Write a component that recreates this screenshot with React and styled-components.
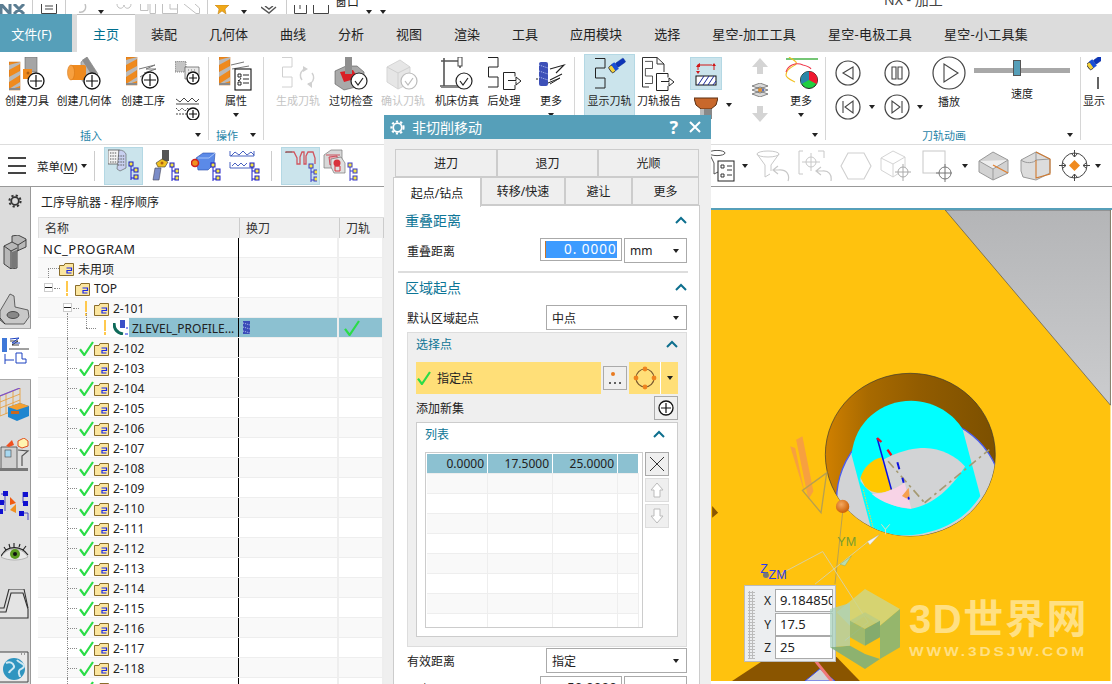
import React from "react";
import styled, { createGlobalStyle } from "styled-components";

const Global = createGlobalStyle`
  html, body { margin: 0; padding: 0; background: #fff; }
  body { font-family: "Noto Sans", "Noto Sans CJK SC", sans-serif; color: #222; overflow: hidden; }
  * { box-sizing: border-box; }
`;

const Page = styled.div`
  position: relative;
  width: 1112px;
  height: 684px;
  overflow: hidden;
  display: flex;
  flex-direction: column;
`;

/* ---------- quick bar ---------- */
const QuickBar = styled.div`
  position: relative;
  height: 14px;
  flex: none;
  display: flex;
  align-items: flex-end;
  overflow: hidden;
  background: #fff;
`;
const WindowTitle = styled.div`
  position: absolute;
  left: 884px;
  bottom: 6px;
  font-size: 14px;
  line-height: 16px;
  white-space: nowrap;
  color: #444;
`;
const QuickLabel = styled.span`
  font-size: 12px;
  line-height: 14px;
  height: 14px;
  margin: 0 4px 0 4px;
  position: relative;
  top: -5px;
  white-space: nowrap;
`;
const Ico = styled.svg`
  display: block;
  flex: none;
`;
const I = ({ w, h, children }) => (
  <Ico width={w} height={h} viewBox={`0 0 ${w} ${h}`} fill="none">{children}</Ico>
);
const QuickSlot = styled.div`
  width: ${(p) => p.$w}px;
  height: 14px;
  flex: none;
  display: flex;
  align-items: flex-end;
  justify-content: center;
  overflow: hidden;
`;
const QuickSep = styled.div`
  width: 1px;
  height: 14px;
  flex: none;
  background: #ccc;
  margin: 0 ${(p) => p.$m || 6}px;
`;

/* ---------- tabs ---------- */
const TabBar = styled.div`
  height: 38px;
  flex: none;
  display: flex;
  background: #dcdcdc;
`;
const FileTab = styled.div`
  width: 72px;
  margin-right: 5px;
  padding-right: 9px;
  background: #569fb9;
  color: #fff;
  font-size: 13px;
  display: flex;
  align-items: center;
  justify-content: center;
`;
const Tab = styled.div`
  padding: 0 16px;
  font-size: 13px;
  display: flex;
  align-items: center;
  white-space: nowrap;
  color: ${(p) => (p.$active ? "#00708f" : "#222")};
  background: ${(p) => (p.$active ? "#fff" : "transparent")};
  border-top: ${(p) => (p.$active ? "1px solid #bbb" : "none")};
  letter-spacing: ${(p) => (p.$wide ? "0.25px" : "0")};
  ${(p) => p.$active && "width: 58px;"}
`;

/* ---------- ribbon ---------- */
const Ribbon = styled.div`
  height: 93px;
  flex: none;
  display: flex;
  background: #fff;
  border-bottom: 1px solid #ddd;
  overflow: hidden;
`;
const Group = styled.div`
  position: relative;
  width: ${(p) => p.$w}px;
  flex: none;
  display: flex;
  flex-direction: column;
  &::after {
    content: "";
    position: absolute;
    right: 0;
    top: 5px;
    bottom: 4px;
    width: 1px;
    background: ${(p) => (p.$last ? "transparent" : "#d6d6d6")};
  }
`;
const GroupBody = styled.div`
  height: 74px;
  display: flex;
  padding-left: ${(p) => p.$pl || 0}px;
`;
const GroupFoot = styled.div`
  flex: 1;
  display: flex;
  align-items: center;
  justify-content: space-between;
  padding: 0 8px 0 ${(p) => p.$pl || 0}px;
  font-size: 11px;
  color: #1f84a8;
`;
const RibbonBtn = styled.div`
  width: ${(p) => p.$w}px;
  flex: none;
  height: ${(p) => (p.$active ? "63px" : "74px")};
  padding-top: ${(p) => (p.$active ? "2px" : "5px")};
  margin-top: ${(p) => (p.$active ? "2px" : "0")};
  display: flex;
  flex-direction: column;
  align-items: center;
  background: ${(p) => (p.$active ? "#cbe4ec" : "transparent")};
  border: ${(p) => (p.$active ? "1px solid #b4d8e4" : "none")};
  border-bottom: none;
`;
const IconBox = styled.div`
  height: 34px;
  display: flex;
  align-items: flex-start;
  justify-content: center;
  flex: none;
`;
const BtnLabel = styled.div`
  margin-top: 2px;
  font-size: 11px;
  line-height: 16px;
  white-space: nowrap;
  color: ${(p) => (p.$off ? "#c4c4c4" : "#222")};
`;
const PlayLabel = styled(BtnLabel)`
  align-self: start;
`;
const Caret = styled.span`
  display: inline-block;
  flex: none;
  width: 0;
  height: 0;
  border-left: 3.5px solid transparent;
  border-right: 3.5px solid transparent;
  border-top: 4px solid #222;
  margin-top: ${(p) => p.$mt || 0}px;
`;
const SmallCol = styled.div`
  width: ${(p) => p.$w}px;
  flex: none;
  display: flex;
  flex-direction: column;
  align-items: center;
  gap: ${(p) => p.$gap || 0}px;
  padding-top: ${(p) => p.$pt || 4}px;
`;
const CaretSlot = styled.div`
  width: ${(p) => p.$w}px;
  flex: none;
  display: flex;
  justify-content: center;
  padding-top: ${(p) => p.$pt}px;
`;
const ToggleBtn = styled.div`
  width: 32px;
  height: 33px;
  flex: none;
  background: #cbe4ec;
  border: 1px solid #b4d8e4;
  display: flex;
  align-items: center;
  justify-content: center;
`;
const AnimGrid = styled.div`
  width: 144px;
  flex: none;
  display: grid;
  grid-template-columns: 36px 12px 38px 8px 50px;
  grid-template-rows: 38px 30px;
  padding-top: 2px;
  align-items: center;
  justify-items: center;
`;
const SpeedBox = styled.div`
  width: 96px;
  flex: none;
  display: flex;
  flex-direction: column;
  align-items: center;
  padding-top: 10px;
`;
const SliderTrack = styled.div`
  position: relative;
  width: 96px;
  height: 5px;
  margin: 6px 0 11px;
  background: #a8a8a8;
`;
const SliderThumb = styled.div`
  position: absolute;
  left: 39px;
  top: -8px;
  width: 8px;
  height: 16px;
  background: #569fb9;
  border: 1px solid #555;
`;

/* ---------- toolbar ---------- */
const Toolbar = styled.div`
  height: 42px;
  flex: none;
  display: flex;
  align-items: center;
  background: #fff;
  border-bottom: 1px solid #999;
`;
const Burger = styled.div`
  width: 18px;
  margin-left: 8px;
  height: 17px;
  flex: none;
  display: flex;
  flex-direction: column;
  justify-content: space-between;
  & > i { display: block; height: 2px; background: #444; }
`;
const MenuLabel = styled.div`
  margin-left: 11px;
  font-size: 11.5px;
  width: 44px;
  white-space: nowrap;
  & u { text-underline-offset: 2px; }
`;
const ToolSep = styled.div`
  width: 1px;
  height: 30px;
  flex: none;
  background: #ccc;
  margin: 0 ${(p) => p.$r}px 0 ${(p) => p.$l}px;
`;
const ToolBtn = styled.div`
  width: ${(p) => p.$w}px;
  height: 38px;
  flex: none;
  display: flex;
  align-items: center;
  justify-content: center;
  background: ${(p) => (p.$active ? "#cbe4ec" : "transparent")};
  border: ${(p) => (p.$active ? "1px solid #b4d8e4" : "none")};
`;
const ToolRight = styled.div`
  margin-left: auto;
  margin-right: 9px;
  display: flex;
  align-items: center;
`;

/* ---------- main ---------- */
const Main = styled.div`
  flex: 1;
  min-height: 0;
  display: flex;
  overflow: hidden;
`;
const Sidebar = styled.div`
  width: 31px;
  flex: none;
  overflow: hidden;
`;
const SideItem = styled.div`
  height: ${(p) => p.$h}px;
  background: ${(p) => (p.$active ? "#fff" : "#dcdcdc")};
  border-right: ${(p) => (p.$active ? "none" : "1px solid #999")};
  border-top: ${(p) => (p.$active ? "1px solid #aaa" : "none")};
  border-bottom: ${(p) => (p.$active ? "1px solid #aaa" : "none")};
  display: flex;
  align-items: center;
  justify-content: center;
  overflow: hidden;
`;
const Navigator = styled.div`
  width: 353px;
  flex: none;
  padding-left: 7px;
  background: #fff;
  overflow: hidden;
`;
const NavTitle = styled.div`
  height: 30px;
  padding-left: 3px;
  font-size: 12px;
  display: flex;
  align-items: center;
  color: #222;
`;
const TreeHead = styled.div`
  height: 21px;
  display: grid;
  grid-template-columns: 201px 100px 1fr;
  background: #f0f0f0;
  border-top: 1px solid #ddd;
  border-left: 1px solid #ddd;
  font-size: 12px;
  color: #333;
`;
const HeadCell = styled.div`
  padding-left: ${(p) => p.$pl}px;
  display: flex;
  align-items: center;
  border-right: 1px solid #ccc;
`;
const TreeRow = styled.div`
  height: 20px;
  display: grid;
  grid-template-columns: 201px 100px 1fr;
  background: ${(p) => (p.$alt ? "#f9f9f9" : "#fff")};
  border-bottom: 1px solid #eee;
`;
const NameCell = styled.div`
  position: relative;
  display: flex;
  align-items: center;
  padding-left: ${(p) => p.$pl}px;
  padding-top: ${(p) => (p.$sel ? "0" : "2px")};
  border-right: 1px solid #000;
  font-size: 12px;
  white-space: nowrap;
  color: #222;
`;
const RootLabel = styled.span`
  font-size: 13px;
  letter-spacing: 0.5px;
`;
const Slot = styled.span`
  width: 16px;
  flex: none;
  display: flex;
  justify-content: center;
`;
const NodeLabel = styled.span`
  margin-left: 4px;
  ${(p) => p.$sel && "flex: 1; align-self: stretch; margin-left: 1px; padding: 1px 0 0 3px; display: flex; align-items: center; background: #8cc1d1;"}
`;
const Warn = styled.i`
  display: block;
  width: 2px;
  height: 15px;
  background: linear-gradient(#ffc94d 0 11px, transparent 11px 12px, #ffc94d 12px);
`;
const DataCell = styled.div`
  display: flex;
  align-items: center;
  padding-left: ${(p) => p.$pl || 0}px;
  border-right: 2px solid #eee;
  background: ${(p) => (p.$sel ? "#8cc1d1" : "transparent")};
`;
const Guide = styled.i`
  position: absolute;
  left: ${(p) => p.$x}px;
  top: ${(p) => p.$y}px;
  ${(p) => (p.$h ? `height: ${p.$h}px; border-left: 1px dotted #888;` : `width: ${p.$w}px; border-top: 1px dotted #888;`)}
`;
const MinusBox = styled.i`
  position: absolute;
  left: ${(p) => p.$x}px;
  top: 5px;
  width: 9px;
  height: 9px;
  border: 1px solid #ccc;
  background: linear-gradient(#fff 0 3px, #222 3px 4px, #fff 4px);
`;

/* ---------- viewport ---------- */
const Viewport = styled.div`
  position: relative;
  flex: 1;
  min-width: 0;
  padding-top: 21px;
  background: #fff;
`;
const ViewCanvas = styled.svg`
  display: block;
  border-top: 2px solid #569fb9;
`;
const CoordPopup = styled.div`
  position: absolute;
  left: 360px;
  top: 398px;
  width: 92px;
  height: 77px;
  padding: 3px 2px 0 3px;
  background: #eceef0;
  border: 1px solid #bbb;
  display: flex;
`;
const Grip = styled.div`
  width: 7px;
  flex: none;
  margin-top: 2px;
  height: 68px;
  background-image: radial-gradient(#bbb 1px, transparent 1.2px);
  background-size: 3px 3px;
`;
const CoordRows = styled.div`
  flex: 1;
  display: flex;
  flex-direction: column;
`;
const CoordRow = styled.div`
  height: 23.5px;
  display: flex;
  align-items: center;
  justify-content: flex-end;
  gap: 4px;
  font-size: 12px;
`;
const CoordInput = styled.div`
  width: 58px;
  height: 23px;
  padding-left: 4px;
  background: #fff;
  border: 1px solid #aaa;
  font-size: 13px;
  line-height: 21px;
  overflow: hidden;
  white-space: nowrap;
`;
const Watermark = styled.div`
  position: absolute;
  left: 830px;
  top: 589px;
  display: flex;
  align-items: flex-start;
  gap: 8px;
  pointer-events: none;
`;
const MarkText = styled.div`
  padding-top: 7px;
  color: rgba(255, 236, 178, 0.72);
`;
const MarkTitle = styled.div`
  font-family: "Liberation Sans", "Noto Sans CJK SC", sans-serif;
  font-weight: 700;
  font-size: 40px;
  line-height: 46px;
  letter-spacing: 1.6px;
  white-space: nowrap;
`;
const MarkSub = styled.div`
  margin-top: 3px;
  font-family: "Liberation Sans", sans-serif;
  font-weight: 700;
  font-size: 13.5px;
  line-height: 13px;
  letter-spacing: 2.5px;
  transform: scaleX(1.15);
  transform-origin: left;
  white-space: nowrap;
`;

/* ---------- dialog ---------- */
const Dialog = styled.div`
  position: absolute;
  left: 384px;
  top: 115px;
  width: 327px;
  height: 569px;
  background: #efefef;
  overflow: hidden;
`;
const DlgTitle = styled.div`
  height: 24px;
  padding: 0 10px 0 6px;
  display: flex;
  align-items: center;
  background: #569fb9;
  color: #fff;
  font-size: 14px;
`;
const DlgName = styled.span`
  margin-left: 7px;
  flex: 1;
`;
const DlgTools = styled.div`
  display: flex;
  align-items: center;
  gap: 11px;
  font-weight: 700;
  font-size: 18px;
`;
const DlgTabs = styled.div`
  height: 28px;
  margin-top: ${(p) => p.$mt || 0}px;
  padding-left: ${(p) => p.$pl}px;
  display: flex;
  align-items: flex-start;
`;
const DlgTab = styled.div`
  position: relative;
  width: ${(p) => p.$w}px;
  height: ${(p) => (p.$active ? "30px" : "28px")};
  flex: none;
  display: flex;
  align-items: center;
  justify-content: center;
  font-size: 12px;
  color: #222;
  background: ${(p) => (p.$active ? "#fff" : "#efefef")};
  border: 1px solid #ccc;
  border-bottom: ${(p) => (p.$active ? "none" : "1px solid #ccc")};
  z-index: ${(p) => (p.$active ? 2 : 1)};
`;
const DlgPanel = styled.div`
  margin: 0 11px 0 9px;
  padding: 0 12px 0 13px;
  height: 500px;
  background: #fff;
  border: 1px solid #ccc;
  border-bottom: none;
`;
const SectionHead = styled.div`
  height: ${(p) => p.$h}px;
  margin-left: ${(p) => p.$ml || 0}px;
  margin-bottom: ${(p) => p.$mb || 0}px;
  display: flex;
  align-items: center;
  justify-content: space-between;
  padding-right: ${(p) => p.$pr || 0}px;
  font-size: ${(p) => p.$fs || 14}px;
  color: #0d7596;
`;
const FieldRow = styled.div`
  display: flex;
  align-items: center;
  justify-content: space-between;
  height: 25px;
  font-size: 12px;
  margin-top: ${(p) => p.$mt || 0}px;
`;
const FieldGroup = styled.div`
  display: flex;
  gap: 2px;
  align-items: flex-start;
`;
const NumInput = styled.div`
  width: 82px;
  height: 23px;
  padding: 2px 4px;
  background: #fff;
  border: 1px solid #aaa;
  font-size: 13.5px;
  text-align: right;
  overflow: hidden;
`;
const NumFill = styled.div`
  height: 17px;
  line-height: 17px;
  background: #3d9bff;
  color: #fff;
  letter-spacing: 1px;
  white-space: nowrap;
  border-left: 1px solid #c8752a;
  overflow: hidden;
  text-align: left;
  padding-left: 18px;
`;
const SelectBox = styled.div`
  width: ${(p) => p.$w}px;
  height: ${(p) => p.$h || 25}px;
  padding: 0 7px 0 5px;
  background: #fff;
  border: 1px solid #aaa;
  display: flex;
  align-items: center;
  justify-content: space-between;
  font-size: 12px;
`;
const Divider = styled.div`
  height: 2px;
  margin: 8px -1px 0 -9px;
  background: #ddd;
`;
const PointGroup = styled.div`
  margin: 2px 0 0 0;
  width: 280px;
  height: 315px;
  padding: 0 8px;
  background: #efefef;
  border: 1px solid #ddd;
`;
const SelectBar = styled.div`
  display: flex;
  align-items: center;
  gap: 2px;
`;
const PointBar = styled.div`
  width: 185px;
  height: 32px;
  padding-left: 1px;
  display: flex;
  align-items: center;
  gap: 6px;
  background: #ffdf78;
  font-size: 12px;
`;
const SquareBtn = styled.div`
  width: 24px;
  height: 24px;
  flex: none;
  display: flex;
  align-items: center;
  justify-content: center;
  background: #efefef;
  border: 1px solid ${(p) => (p.$light ? "#ddd" : "#aaa")};
`;
const SplitBtn = styled.div`
  width: 49px;
  height: 32px;
  flex: none;
  display: flex;
  align-items: center;
  background: #ffdf78;
`;
const SplitMain = styled.div`
  width: 32px;
  height: 100%;
  display: flex;
  align-items: center;
  justify-content: center;
  border-right: 1px solid #fff;
`;
const SplitCaret = styled.div`
  flex: 1;
  display: flex;
  justify-content: center;
`;
const AddRow = styled.div`
  height: 24px;
  margin-top: 2px;
  display: flex;
  align-items: center;
  justify-content: space-between;
  font-size: 12px;
`;
const ListBox = styled.div`
  margin-top: 2px;
  height: 215px;
  padding: 0 8px;
  background: #fff;
  border: 1px solid #ccc;
`;
const ListBody = styled.div`
  margin-top: 7px;
  display: flex;
  gap: 2px;
`;
const ListTable = styled.div`
  width: 218px;
  height: 176px;
  padding: 1px 3px 0 1px;
  border: 1px solid #ccc;
  overflow: hidden;
  flex: none;
`;
const ListRow = styled.div`
  height: 20px;
  display: grid;
  grid-template-columns: 61px 65px 65px 1fr;
  background: ${(p) => (p.$alt ? "#f9f9f9" : "#fff")};
  border-bottom: 1px solid #eee;
`;
const ListCell = styled.div`
  padding-right: 3px;
  text-align: right;
  font-size: 12px;
  line-height: 19px;
  color: #222;
  background: ${(p) => (p.$sel ? "#8cc1d1" : "transparent")};
  border-right: 1px solid ${(p) => (p.$sel ? "#fff" : "#eee")};
`;
const ListTools = styled.div`
  display: flex;
  flex-direction: column;
  gap: 2px;
`;

/* ---------- drawings ---------- */
const Cutter = ({ x = 0, y = 0, h = 28 }) => (
  <g transform={`translate(${x} ${y})`}>
    <rect width="11" height={h} fill="#ef8a1e" stroke="#c46a10" strokeWidth=".5" />
    <path d="M0 3 11 0V2L0 8ZM0 15 11 9V13L0 20ZM0 27 11 20V24L0 28Z" fill="#b9b9b9" />
    <rect y={h - 2} width="11" height="2" fill="#8a8a8a" />
  </g>
);
const Plus = ({ cx, cy, r = 8 }) => (
  <g>
    <circle cx={cx} cy={cy} r={r} fill="#fff" stroke="#111" strokeWidth="1.3" />
    <path d={`M${cx - r + 2} ${cy}H${cx + r - 2}M${cx} ${cy - r + 2}V${cy + r - 2}`} stroke="#111" strokeWidth="1.2" />
  </g>
);
const CheckBadge = ({ cx, cy, r = 8, c = "#222" }) => (
  <g>
    <circle cx={cx} cy={cy} r={r} fill="#fff" stroke={c} strokeWidth="1.2" />
    <path d={`M${cx - 4} ${cy}l3 4 5-7`} stroke={c} strokeWidth="1.2" />
  </g>
);
const Path3 = ({ x = 0, y = 0, c = "#222", s = 1 }) => (
  <path transform={`translate(${x} ${y}) scale(${s})`} d="M0 .5H10V10H.5V20H10V30H0" stroke={c} strokeWidth="1" />
);
const Torch = ({ x = 0, y = 0 }) => (
  <g transform={`translate(${x} ${y}) rotate(-35) scale(.8)`}>
    <rect x="0" y="-4" width="6" height="9" rx="2" fill="#f4d23c" stroke="#223" />
    <rect x="5" y="-5" width="5" height="10" fill="#1a4fd8" />
    <rect x="10" y="-3" width="12" height="6" rx="1" fill="#0d35b8" stroke="#0a2a90" strokeWidth=".5" />
  </g>
);
const DocArrow = ({ x = 0, y = 0 }) => (
  <g transform={`translate(${x} ${y})`} stroke="#222" strokeWidth="1">
    <path d="M12 4.5V.5H.5V17.5H12V13" />
    <path d="M5 8.5H13V5L18 9 13 13V9.5" fill="#fff" />
  </g>
);

const IcoCreateTool = () => (
  <I w={36} h={34}>
    <rect x="16" y="0" width="12" height="15" fill="#a5a5a5" stroke="#666" strokeWidth=".6" />
    <path d="M14 12h9v4l-2 6h-7z" fill="#ef8a1e" />
    <circle cx="19" cy="16" r="1.5" fill="#b06010" />
    <Cutter y={5} />
    <Plus cx={27} cy={24} />
  </I>
);
const IcoCreateGeom = () => (
  <I w={34} h={34}>
    <path d="M14 5 20 0 31 17 20 30 14 22Z" fill="#b9b9b9" stroke="#777" strokeWidth=".6" />
    <path d="M15 3 20 0 30 16 24 17Z" fill="#8d8d8d" />
    <rect x="3" y="8" width="16" height="15" rx="2" fill="#ef8a1e" />
    <ellipse cx="4" cy="15.5" rx="3.5" ry="7.5" fill="#f7a040" stroke="#d07010" strokeWidth=".5" />
    <Plus cx={25} cy={24} />
  </I>
);
const IcoCreateOp = () => (
  <I w={34} h={34}>
    <Cutter y={0} />
    <path d="M13 12 29 8 20 12 30 12 18 16M14 20 22 15" stroke="#777" strokeWidth="1" />
    <Plus cx={24} cy={23} />
  </I>
);
const IcoSmallBlocks = () => (
  <I w={25} h={24}>
    <rect x="0" y="0" width="11" height="11" fill="#c4c4c4" stroke="#555" strokeWidth=".7" strokeDasharray="1 1" />
    <path d="M10 6h14v12H10z" fill="#e8e8e8" stroke="#555" strokeWidth=".7" />
    <path d="M13 9h8M13 12h8" stroke="#777" strokeDasharray="1 2" />
    <Plus cx={18} cy={17} r={6} />
  </I>
);
const IcoSmallWaves = () => (
  <I w={25} h={24}>
    <path d="M1 3l4 3 4-4 4 4 4-4 4 4 3-3M1 8H24" stroke="#333" strokeWidth=".9" />
    <path d="M1 12l3 3 3-3 3 3 3-3 3 3 3-3 3 3M1 18H14" stroke="#333" strokeWidth=".9" strokeDasharray="2 1" />
    <Plus cx={18} cy={18} r={6} />
  </I>
);
const IcoAttr = () => (
  <I w={34} h={34}>
    <Cutter x={0} y={0} />
    <path d="M12 8 25 5M13 12 30 9" stroke="#777" />
    <rect x="16" y="12" width="16" height="21" fill="#fff" stroke="#111" strokeWidth="1.1" />
    <path d="M19 17h3v3h-3zM19 25h3v3h-3zM24 18h6M24 26h6M24 22h6M19 23l1 1 2-3" stroke="#111" strokeWidth=".9" />
  </I>
);
const IcoGenPath = () => (
  <I w={34} h={34}>
    <Path3 x={1} y={0} c="#d0d0d0" />
    <path d="M21 23a7 7 0 0 1 1-10l3-1M31 16a7 7 0 0 1-1 10l-3 1" stroke="#d0d0d0" strokeWidth="1.5" />
    <path d="M22 9l5 3-5 3zM31 31l-5-4 5-2z" fill="#d0d0d0" />
  </I>
);
const IcoGouge = () => (
  <I w={34} h={34}>
    <path d="M1 14 12 9H23L30 15V28L10 33 1 27Z" fill="#a9a9a9" stroke="#555" strokeWidth=".6" />
    <path d="M6 15 19 13 24 21 10 25Z" fill="#d91f26" />
    <rect x="11" y="0" width="7" height="17" fill="#8f8f8f" />
    <CheckBadge cx={25} cy={24} />
  </I>
);
const IcoConfirm = () => (
  <I w={34} h={34}>
    <path d="M1 10 14 3 24 10V26L12 32 1 25Z" fill="#e6e6e6" stroke="#d5d5d5" />
    <path d="M1 10 12 16V32M12 16 24 10" stroke="#d0d0d0" />
    <CheckBadge cx={23} cy={24} c="#bbb" />
  </I>
);
const IcoMachine = () => (
  <I w={34} h={34}>
    <path d="M4 29V1M1 4H21M20 1V11M0 29H24" stroke="#555" strokeWidth="1.6" />
    <rect x="18" y="0" width="4" height="9" fill="#fff" stroke="#444" />
    <path d="M1 29h22v2H1z" fill="#888" />
    <CheckBadge cx={24} cy={24} />
  </I>
);
const IcoPost = () => (
  <I w={34} h={34}>
    <Path3 x={1} y={0} />
    <DocArrow x={16} y={15} />
  </I>
);
const IcoMore1 = () => (
  <I w={30} h={34}>
    <rect x="3" y="5" width="9" height="24" rx="2" fill="#3d50b8" />
    <path d="M3 8l9 3M3 14l9 3M3 20l9 3" stroke="#b8c4f0" strokeDasharray="1 1" />
    <path d="M14 12 28 8 20 16M0 22h2M14 23 26 17" stroke="#222" strokeWidth="1.1" />
    <path d="M12 26 24 21 14 27" stroke="#222" />
  </I>
);
const IcoShowPath = () => (
  <I w={32} h={34}>
    <Path3 x={1} y={1} />
    <Torch x={16} y={13} />
  </I>
);
const IcoReport = () => (
  <I w={34} h={34}>
    <path d="M.5 .5H15L22 7V15M22 7H15V.5M7 30H.5V.5" stroke="#333" />
    <Path3 x={3} y={4} s={0.75} />
    <DocArrow x={14} y={16} />
  </I>
);
const IcoThick = () => (
  <I w={24} h={24}>
    <path d="M4 8V3M20 8V2M6 3H18" stroke="#d01818" strokeWidth="1" />
    <path d="M2 5l2-3 2 3zM18 4l2-3 2 3zM6 1v4l-3-2z" fill="#d01818" />
    <path d="M2 9 4 12 6 9z" fill="#d01818" />
    <rect x="2" y="14" width="20" height="9" fill="#fff" stroke="#111" />
    <path d="M4 23l6-9M9 23l6-9M14 23l6-9M19 23l3-4" stroke="#1a2a9a" />
  </I>
);
const IcoHolder = () => (
  <I w={24} h={22}>
    <path d="M0 1H24L22 8 17 12H7L2 8Z" fill="#c8682c" stroke="#5a2e10" />
    <rect x="6" y="12" width="12" height="10" fill="#888" />
    <rect x="6" y="12" width="4" height="10" fill="#bbb" />
  </I>
);
const IcoUp = () => (
  <I w={16} h={16}><path d="M8 0 16 9H11V16H5V9H0Z" fill="#d4d4d4" /></I>
);
const IcoDown = () => (
  <I w={16} h={16}><path d="M8 16 16 7H11V0H5V7H0Z" fill="#d4d4d4" /></I>
);
const IcoLayers = () => (
  <I w={16} h={14}>
    <path d="M8 0 16 3 8 6 0 3ZM0 7 8 4 16 7 8 10ZM0 11 8 8 16 11 8 14Z" fill="#d8d8d8" stroke="#444" strokeWidth=".6" />
    <circle cx="8" cy="7" r="2" fill="#e09030" />
    <circle cx="11" cy="7" r="1" fill="#3050c0" />
  </I>
);
const IcoMore2 = () => (
  <I w={33} h={32}>
    <path d="M1 2H33" stroke="#18a018" strokeWidth="1.2" />
    <path d="M4 0c4 3 10 5 6 8-5 3-9 5-9 10 0 3 5 5 9 7" stroke="#f2c020" strokeWidth="1.1" />
    <path d="M1 15c2-7 10-10 17-7 4 1 7 2 8 4" stroke="#f0384c" strokeWidth="1.1" />
    <circle cx="24" cy="23" r="8.5" fill="#1fcf40" stroke="#222" strokeWidth="1" />
    <path d="M24 23V14.5A8.5 8.5 0 0 1 31.5 27Z" fill="#f01830" />
    <path d="M24 23V14.5A8.5 8.5 0 0 0 16.6 27Z" fill="#2a86a8" />
  </I>
);
const Round = ({ r = 12, children }) => {
  const s = r * 2 + 2;
  return (
    <I w={s} h={s}>
      <circle cx={r + 1} cy={r + 1} r={r} stroke="#444" strokeWidth="1.2" />
      <g stroke="#444" strokeWidth="1.1" transform={`translate(${r + 1} ${r + 1})`}>{children}</g>
    </I>
  );
};
const IcoShowTorch = () => (
  <I w={14} h={34}>
    <Torch x={1} y={10} />
    <path d="M11 20V32" stroke="#222" strokeWidth="1.4" />
  </I>
);

const NodeTree = ({ x = 0, y = 0, c = "#1a1ac8" }) => (
  <g transform={`translate(${x} ${y})`}>
    <path d="M2 0V18M2 8H6M2 16H6" stroke={c} />
    <rect x="0" y="0" width="4" height="4" fill="#f5e642" stroke={c} />
    <rect x="5" y="6" width="4" height="4" fill="#f5e642" stroke={c} />
    <rect x="5" y="13" width="4" height="4" fill="#f5e642" stroke={c} />
  </g>
);
const TbProgram = () => (
  <I w={32} h={33}>
    <rect x="0" y="1" width="11" height="14" fill="#f4f4f4" stroke="#444" strokeWidth=".7" />
    <path d="M2 4h7M2 7h7M2 10h7M2 13h7" stroke="#555" strokeDasharray="1.4 1" />
    <path d="M11 1c4 0 6 2 7 4v14l-6 3-3-2z" fill="#c8d0f0" stroke="#555" strokeWidth=".6" />
    <path d="M10 7h7M10 10h7M10 13h7M10 16h7" stroke="#555" strokeDasharray="1.4 1" />
    <NodeTree x={21} y={13} />
  </I>
);
const TbTool = () => (
  <I w={28} h={32}>
    <rect x="11" y="0" width="7" height="11" fill="#555" />
    <path d="M5 13 11 9 17 12 14 17H7Z" fill="#f0c020" stroke="#333" strokeWidth=".6" />
    <circle cx="11" cy="13" r="1.5" fill="#b06010" />
    <path d="M4 18H10L8 30 2 30 3 24Z" fill="#7a8cc8" stroke="#445" strokeWidth=".6" />
    <NodeTree x={19} y={13} />
  </I>
);
const TbGeom = () => (
  <I w={34} h={32}>
    <path d="M5 8 12 3H24L23 14 17 20H7Z" fill="#5b8ae8" stroke="#2a4aa8" strokeWidth=".6" />
    <path d="M7 8H18L24 3" stroke="#a8c4f8" />
    <circle cx="4" cy="13" r="3.5" fill="#f09020" stroke="#d02020" strokeWidth="1.5" />
    <NodeTree x={20} y={13} />
  </I>
);
const TbWave = () => (
  <I w={32} h={34}>
    <path d="M1 2V7H25V2M2 7 6 3l4 3 4-4 4 4 4-3 3 3" stroke="#1a3ab0" strokeWidth=".8" />
    <path d="M1 13V19H25M3 17l3-3 3 3 3-3 3 3 3-3" stroke="#1a3ab0" strokeWidth=".8" />
    <NodeTree x={21} y={14} />
  </I>
);
const TbPathOn = () => (
  <I w={32} h={32}>
    <path d="M1 3V2H9L12 8V14H15V7L17 2H19V14H21V6L23 2H28L30 8V14" stroke="#d0555f" strokeWidth="1.3" />
    <path d="M1 3V2H7" stroke="#777" />
    <NodeTree x={24} y={14} c="#3a3ac8" />
  </I>
);
const TbGouge = () => (
  <I w={36} h={34}>
    <path d="M1 6 8 1H19V14L11 19H1Z" fill="#d8d8d8" stroke="#777" strokeWidth=".7" />
    <path d="M3 6H17M6 8l8-1 1 6-8 3z" stroke="#c73040" fill="#f0a8b0" strokeWidth=".8" />
    <path d="M8 10 18 8 22 14V24L11 24 8 18Z" fill="#e0e0e0" stroke="#777" strokeWidth=".7" />
    <circle cx="14" cy="14" r="3.5" fill="#d8323c" />
    <path d="M12 17h5v5h-5z" stroke="#d8323c" />
    <NodeTree x={25} y={14} c="#3a3ac8" />
  </I>
);
const TbFunnel = () => (
  <I w={26} h={32}>
    <ellipse cx="8" cy="3" rx="8" ry="2.6" stroke="#555" />
    <path d="M0 3 5 13V24L11 21" stroke="#555" />
    <rect x="9" y="11" width="16" height="20" fill="#fff" stroke="#222" />
    <path d="M12 15h3v3h-3zM12 24h3v3h-3zM18 16h5M18 20h5M18 25h5" stroke="#222" strokeWidth=".9" />
  </I>
);
const TbFunnelBack = () => (
  <I w={34} h={32}>
    <ellipse cx="12" cy="4" rx="11" ry="3" stroke="#c8c8c8" />
    <path d="M1 4 9 15V27L14 24M23 4 15 15V21" stroke="#c8c8c8" />
    <path d="M32 31c2-6-1-12-10-11l-4 0M22 16 17 20 22 24" stroke="#c8c8c8" strokeWidth="1.2" />
  </I>
);
const TbTarget = () => (
  <I w={34} h={32}>
    <path d="M5 1H1V24H5M20 1H26V8" stroke="#c8c8c8" />
    <circle cx="13" cy="12" r="5" stroke="#c8c8c8" />
    <path d="M13 3V21M4 12H22" stroke="#c8c8c8" />
    <path d="M33 31c1-6-2-11-9-10H19M23 17 18 21 23 25" stroke="#c8c8c8" strokeWidth="1.2" />
  </I>
);
const TbHex = () => (
  <I w={32} h={28}>
    <path d="M8 1H24L31 14 24 27H8L1 14Z" stroke="#cfcfcf" strokeWidth="1.1" />
  </I>
);
const TbCubePlus = () => (
  <I w={32} h={32}>
    <path d="M1 8 13 1 25 7V19L13 27 1 20ZM1 8 13 14 25 7M13 14V27" stroke="#d4d4d4" />
    <circle cx="23" cy="22" r="5" fill="#fff" stroke="#aaa" />
    <path d="M23 14V31M15 22H31" stroke="#aaa" />
  </I>
);
const TbSquarePlus = () => (
  <I w={30} h={32}>
    <rect x="1" y="1" width="22" height="22" stroke="#c8c8c8" />
    <circle cx="23" cy="23" r="6" fill="#fff" stroke="#777" />
    <path d="M23 14V32M14 23H31" stroke="#777" />
  </I>
);
const TbCubeCut = () => (
  <I w={31} h={30}>
    <path d="M1 10 15 1 30 9V22L15 29 1 21Z" fill="#d2d2d2" stroke="#999" />
    <path d="M1 10 15 18 30 9" stroke="#999" fill="#eee" />
    <path d="M15 18V29" stroke="#999" />
    <path d="M15 14 30 22" stroke="#e08030" strokeWidth="1.2" />
  </I>
);
const TbCubeSlice = () => (
  <I w={31} h={30}>
    <path d="M1 9 16 1 30 8V22L16 29 3 26 1 20Z" fill="#dcdcdc" stroke="#999" />
    <path d="M1 9C6 13 14 12 16 9L30 8M16 1 16 9" stroke="#999" />
    <path d="M16 1 30 8V23L16 27V9" stroke="#d07a30" strokeWidth="1.1" />
  </I>
);
const TbFit = () => (
  <I w={31} h={31}>
    <circle cx="15.5" cy="15.5" r="12.5" stroke="#444" />
    <path d="M15.5 10 21 15.5 15.5 21 10 15.5Z" fill="#f08a1e" />
    <path d="M15.5 0V7M0 15.5H7M31 15.5H24M15.5 31V24M13 4l2.5 3 2.5-3M4 13l3 2.5L4 18M27 13l-3 2.5 3 2.5M13 27l2.5-3 2.5 3" stroke="#444" />
  </I>
);

const Folder = () => (
  <I w={15} h={14}>
    <path d="M.5 3.5V13.5H14.5V1.5H6L5 3.5Z" fill="#fbe6a0" stroke="#8a6d2b" />
    <path d="M7.5 6H12.5V8.5H8V11H12.5" stroke="#1a28e8" strokeWidth="1.2" />
  </I>
);
const OpIcon = () => (
  <I w={15} h={15}>
    <path d="M1 3c0 6 3 10 9 11" stroke="#0f6a5a" strokeWidth="3" />
    <rect x="7" y="0" width="5" height="8" fill="#3a50c8" />
    <path d="M12 14h3M13 8h2" stroke="#1a28e8" />
  </I>
);
const Check = ({ s = 15 }) => (
  <I w={s} h={s}>
    <path d={`M1 ${s * 0.55} ${s * 0.35} ${s - 1} ${s - 1} 1`} stroke="#2bdc48" strokeWidth="2.2" />
  </I>
);
const TreeToolIcon = () => (
  <I w={8} h={13}>
    <rect width="7" height="13" fill="#3a4cb8" />
    <path d="M0 2l7 2M0 6l7 2M0 10l7 2" stroke="#b8c4f0" strokeDasharray="1 1" />
  </I>
);
const Chevron = () => (
  <I w={12} h={8}>
    <path d="M1 7 6 2 11 7" stroke="#0d6f8e" strokeWidth="2" />
  </I>
);
const Gear = ({ c = "#fff", s = 14 }) => (
  <I w={s} h={s}>
    <circle cx={s / 2} cy={s / 2} r={s / 2 - 3.2} stroke={c} strokeWidth="1.8" />
    <circle cx={s / 2} cy={s / 2} r={s / 2 - 1.4} stroke={c} strokeWidth="2" strokeDasharray="2.2 2.2" />
  </I>
);

const SideBlock = () => (
  <I w={24} h={34}>
    <path d="M1 11 9 7V1l6-1 8 4V12L14 16V33L8 34 1 29Z" fill="#b8b8b8" stroke="#333" strokeWidth=".9" />
    <path d="M1 11 8 16 14 13M8 16V34M9 7 15 10V16M15 10 23 5" stroke="#333" strokeWidth=".9" />
    <path d="M9 17 14 15V32L9 34Z" fill="#777" />
  </I>
);
const SideBracket = () => (
  <I w={30} h={32}>
    <path d="M0 18 10 1 14 3 15 14 28 17 29 24 24 31 5 31 0 27Z" fill="#c8c8c8" stroke="#444" strokeWidth=".8" />
    <ellipse cx="13" cy="22" rx="6" ry="3.5" fill="#888" stroke="#333" strokeWidth=".8" />
    <path d="M0 25 5 31" stroke="#333" />
  </I>
);
const SideProg = () => (
  <I w={28} h={36}>
    <rect x="0" y="2" width="5" height="14" fill="#3f78d8" />
    <path d="M8 5h8L10 9h7M7 13h20" stroke="#111" strokeWidth=".8" />
    <path d="M8 3 17 2 10 7 18 7M3 18V28M3 24H12" stroke="#1a40c0" strokeWidth="1" />
    <path d="M14 17V27H24V23L20 23V17Z" stroke="#1a40c0" strokeWidth="1" />
  </I>
);
const SideMesh = () => (
  <I w={30} h={34}>
    <path d="M0 8 20 0V20L0 28ZM0 14l20-8M0 20l20-8M6 6V26M13 3V23" stroke="#e8a040" strokeWidth=".9" />
    <path d="M0 8l20-8" stroke="#7a50d0" strokeWidth="1.2" />
    <path d="M8 19 20 15 29 18V28L17 33 8 29Z" fill="#1f86d0" />
    <path d="M8 19 20 15 29 18 17 22Z" fill="#f5a030" />
    <rect x="11" y="23" width="8" height="3" fill="#c86820" />
  </I>
);
const SideMachine = () => (
  <I w={30} h={34}>
    <path d="M1 9h16v22H1z" fill="#d0d0d0" stroke="#444" strokeWidth=".8" />
    <rect x="5" y="12" width="6" height="7" fill="#a8d8f0" stroke="#444" strokeWidth=".6" />
    <path d="M18 12 28 13 22 18 22 28" stroke="#555" strokeWidth="1.2" />
    <rect x="0" y="30" width="28" height="3" fill="#777" />
    <path d="M6 8 12 2 14 7 9 9Z" fill="#f05020" />
    <path d="M18 3 24 0 28 3V8L22 10 18 8Z" fill="#fff4b0" stroke="#e05020" />
  </I>
);
const SideNet = () => (
  <I w={30} h={32}>
    <path d="M1 5H5V22M1 13H5M23 3V14M23 14H28M21 24H28V31" stroke="#4a4ac0" />
    <rect x="3" y="2" width="5" height="5" fill="#1010d0" />
    <rect x="0" y="11" width="4" height="5" fill="#1010d0" />
    <rect x="0" y="20" width="3" height="5" fill="#1010d0" />
    <rect x="23" y="3" width="5" height="5" fill="#1010d0" />
    <rect x="23" y="12" width="5" height="5" fill="#1010d0" />
    <rect x="19" y="22" width="5" height="5" fill="#1010d0" />
    <path d="M10 8 16 14 10 16Z" fill="#f05a10" />
    <path d="M16 15 10 21 16 24Z" fill="#f09020" />
  </I>
);
const SideEye = () => (
  <I w={28} h={18}>
    <path d="M0 14C6 4 20 3 27 14 20 18 7 18 0 14Z" fill="#e8e8e8" stroke="#888" strokeWidth=".5" />
    <circle cx="14" cy="11" r="5" fill="#5a9a20" />
    <circle cx="14" cy="11" r="2" fill="#111" />
    <path d="M0 13C6 2 20 2 27 12M5 7 3 4M9 5 8 1M13 4V0M18 4 19 1M22 7 25 3" stroke="#222" strokeWidth="1.1" />
  </I>
);
const SideProfile = () => (
  <I w={30} h={30}>
    <path d="M0 23H6L11 4H23L28 20V29H0" stroke="#333" strokeWidth="1.1" fill="#e4e4e4" />
    <path d="M0 19H4L9 0H24L28 19" stroke="#333" strokeWidth="1.1" />
  </I>
);
const SideGlobe = () => (
  <I w={30} h={32}>
    <path d="M0 1H28V31H0" stroke="#444" fill="#eaeaea" />
    <path d="M21 3h1M24 3h1" stroke="#444" />
    <circle cx="14" cy="18" r="11" fill="#2f95c0" />
    <path d="M6 12c4-2 7 0 8 3s-4 3-5 7M17 9c2 3 7 3 7 6s-4 2-5 5 1 4 1 6" stroke="#cfe8f2" strokeWidth="2" />
  </I>
);

/* ---------- data ---------- */
const tabs = ["装配", "几何体", "曲线", "分析", "视图", "渲染", "工具", "应用模块", "选择", "星空-加工工具", "星空-电极工具", "星空-小工具集"];
const programs = Array.from({ length: 18 }, (_, i) => `2-${102 + i}`);
const listRows = Array.from({ length: 9 }, (_, i) => i);

const NavRows = () => {
  const rows = [];
  rows.push(
    <TreeRow key="root"><NameCell $pl={5}><RootLabel>NC_PROGRAM</RootLabel></NameCell><DataCell /><DataCell /></TreeRow>
  );
  rows.push(
    <TreeRow key="unused" $alt>
      <NameCell $pl={5}>
        <Guide $x={10} $y={10} $w={11} />
        <Guide $x={10} $y={10} $h={10} />
        <Slot /><Folder /><NodeLabel>未用项</NodeLabel>
      </NameCell>
      <DataCell /><DataCell />
    </TreeRow>
  );
  rows.push(
    <TreeRow key="top">
      <NameCell $pl={21}>
        <MinusBox $x={6} />
        <Guide $x={16} $y={10} $w={6} />
        <Slot><Warn /></Slot><Folder /><NodeLabel>TOP</NodeLabel>
      </NameCell>
      <DataCell /><DataCell />
    </TreeRow>
  );
  rows.push(
    <TreeRow key="101" $alt>
      <NameCell $pl={40}>
        <MinusBox $x={25} />
        <Guide $x={35} $y={10} $w={6} />
        <Guide $x={29} $y={15} $h={6} />
        <Slot><Warn /></Slot><Folder /><NodeLabel>2-101</NodeLabel>
      </NameCell>
      <DataCell /><DataCell />
    </TreeRow>
  );
  rows.push(
    <TreeRow key="op">
      <NameCell $pl={59} $sel>
        <Guide $x={29} $y={0} $h={20} />
        <Guide $x={48} $y={-5} $h={15} />
        <Guide $x={48} $y={10} $w={10} />
        <Slot><Warn /></Slot><OpIcon /><NodeLabel $sel>ZLEVEL_PROFILE...</NodeLabel>
      </NameCell>
      <DataCell $sel $pl={4}><TreeToolIcon /></DataCell>
      <DataCell $sel $pl={5}><Check s={16} /></DataCell>
    </TreeRow>
  );
  programs.forEach((name, i) => {
    rows.push(
      <TreeRow key={name} $alt={i % 2 === 0}>
        <NameCell $pl={40}>
          <Guide $x={29} $y={0} $h={20} />
          <Guide $x={30} $y={10} $w={9} />
          <Slot><Check /></Slot><Folder /><NodeLabel>{name}</NodeLabel>
        </NameCell>
        <DataCell /><DataCell />
      </TreeRow>
    );
  });
  return rows;
};

const Scene = () => (
  <ViewCanvas width="728" height="473" viewBox="384 211 728 473">
    <defs>
      <linearGradient id="plate" x1="0" y1="0" x2="0" y2="1">
        <stop offset="0" stopColor="#b4b5b7" /><stop offset="1" stopColor="#cbccce" />
      </linearGradient>
      <linearGradient id="bore" x1="0" y1="0" x2="1" y2="0">
        <stop offset="0" stopColor="#d08000" /><stop offset=".25" stopColor="#a86a00" /><stop offset=".55" stopColor="#925c00" /><stop offset="1" stopColor="#7c5000" />
      </linearGradient>
      <radialGradient id="ball" cx=".4" cy=".35" r=".7">
        <stop offset="0" stopColor="#f5a860" /><stop offset="1" stopColor="#c85a00" />
      </radialGradient>
      <clipPath id="hole"><ellipse cx="597" cy="260" rx="256" ry="245" /></clipPath>
    </defs>
    <rect x="384" y="211" width="728" height="473" fill="#ffc20e" />
    <path d="M946 211H1112V407Z" fill="url(#plate)" stroke="#444" strokeWidth=".6" />
    <g transform="translate(712 370) scale(.33333)">
      <path d="M0 415 18 435 0 450Z" fill="#8a5500" />
      <ellipse cx="597" cy="260" rx="256" ry="245" fill="url(#bore)" stroke="#333" strokeWidth="2" />
      <g clipPath="url(#hole)">
        <circle cx="625" cy="395" r="250" fill="#d2d3d5" stroke="#4a5cf0" strokeWidth="4" />
        <path d="M420 260C430 160 510 98 600 98 670 98 730 140 755 185L808 385C780 430 720 490 600 503 540 505 510 495 478 480Z" fill="#00ffff" />
        <path d="M447 330C500 270 580 240 640 240 690 240 735 265 762 296 720 360 670 410 600 423 540 420 480 385 447 340Z" fill="#d2d3d5" />
        <path d="M447 330C455 300 480 275 510 268L540 365C510 380 480 378 460 355Z" fill="#ffc800" />
        <path d="M480 378C510 380 540 370 580 345L600 423C560 420 510 405 480 378Z" fill="#f7d3e6" />
        <path d="M530 280 640 405M640 405 835 245" stroke="#a59a72" strokeWidth="5" strokeDasharray="26 12 8 12" />
        <path d="M455 365 485 480" stroke="#ffd040" strokeWidth="3" strokeDasharray="5 3" />
        <path d="M497 210 540 365" stroke="#0a10e0" strokeWidth="4.5" />
        <path d="M497 210 510 222M528 245 540 262" stroke="#f01020" strokeWidth="7" />
        <path d="M558 283 564 304M573 330 577 345M590 385 593 395" stroke="#0a10e0" strokeWidth="6" />
        <path d="M572 385 592 360 595 385 585 392Z" fill="#f5a050" />
      </g>
      <path d="M253 215 272 205 305 370 290 395ZM235 235 250 240 280 380Z" fill="#f7a040" />
      <path d="M345 315 272 368 328 435Z" fill="none" stroke="#b8a050" strokeWidth="4" />
      <path d="M393 435 370 650" stroke="#b8a050" strokeWidth="3" />
      <path d="M205 620 333 552 470 765 400 820M310 650 470 522" stroke="#d8d0a0" strokeWidth="3" fill="none" />
      <path d="M385 590 420 565 400 595Z" fill="#b8dcb0" stroke="#6a9a68" />
      <path d="M468 522 505 500 475 532Z" fill="#f4f4f4" stroke="#999" />
      <path d="M510 470 522 485 535 470M522 485V500" stroke="#e8dfb8" strokeWidth="3" fill="none" />
      <circle cx="393" cy="416" r="20" fill="url(#ball)" />
      <text x="377" y="536" fontSize="38" fill="#7a9c30" fontFamily="Liberation Sans">YM</text>
      <text x="170" y="636" fontSize="38" fill="#2a3af0" fontFamily="Liberation Sans">ZM</text>
      <text x="145" y="616" fontSize="38" fill="#2a3af0" fontFamily="Liberation Sans">Z</text>
      <circle cx="162" cy="623" r="9" fill="#777" />
      <path d="M60 942 170 870H375L445 942Z" fill="#8a5500" />
      <path d="M280 942 325 905 370 942Z" fill="#d2d3d5" stroke="#3a4cf0" strokeWidth="3" />
      <path d="M310 880 360 942" stroke="#f07878" strokeWidth="9" />
    </g>
  </ViewCanvas>
);

const Logo = () => (
  <I w={71} h={81}>
    <g transform="scale(.33333)" strokeWidth="1">
      <path d="M105 0 210 60 150 110 105 80 60 110 20 70Z" fill="rgba(205,215,135,.82)" />
      <path d="M210 60V175L150 210 150 110Z" fill="rgba(130,180,125,.85)" />
      <path d="M150 210 105 240 0 175 60 170 105 195Z" fill="rgba(125,175,125,.88)" />
      <path d="M0 60 60 42 60 170 0 175Z" fill="rgba(170,210,190,.75)" />
      <path d="M60 95 105 70 150 95 105 120Z" fill="rgba(190,205,130,.9)" />
      <path d="M60 95 105 120V170L60 145Z" fill="rgba(150,185,120,.9)" />
      <path d="M150 95 105 120V170L150 145Z" fill="rgba(125,170,115,.95)" />
    </g>
  </I>
);

export default function App() {
  return (
    <>
      <Global />
      <Page>
        <QuickBar>
          <QuickSlot $w={29}>
            <I w={29} h={10}><path d="M1 10V0M1 0 10 10M10 10V0M14 0l10 10M24 0 14 10" stroke="#5b7d92" strokeWidth="3" /></I>
          </QuickSlot>
          <QuickSep $m={3} />
          <QuickSlot $w={26}>
            <I w={16} h={10}><path d="M.5 0V9.5H15.5V0" stroke="#444" /><path d="M4 2H12M4 5H12" stroke="#444" /></I>
          </QuickSlot>
          <QuickSep $m={3} />
          <QuickSlot $w={22}>
            <I w={13} h={10}><path d="M11 0c2 5-1 9-6 8" stroke="#c0c0c0" strokeWidth="1.4" /></I>
          </QuickSlot>
          <QuickSlot $w={20}><Caret $mt={-6} /></QuickSlot>
          <QuickSlot $w={26}>
            <I w={16} h={10}><path d="M1 0c0 5 6 6 7 1M15 0c0 5-6 6-7 1" stroke="#c0c0c0" /></I>
          </QuickSlot>
          <QuickSlot $w={22}>
            <I w={16} h={10}><path d="M.5 0V6.5H8V0M10 0V9.5H15.5V0" stroke="#c0c0c0" /></I>
          </QuickSlot>
          <QuickSlot $w={22}>
            <I w={16} h={10}><path d="M.5 0V9.5H15.5V0M8 0V5H15" stroke="#c0c0c0" /></I>
          </QuickSlot>
          <QuickSlot $w={22}>
            <I w={16} h={10}><path d="M0 0 12 9.5H15.5V4L11 0" stroke="#c0c0c0" /></I>
          </QuickSlot>
          <QuickSep $m={4} />
          <QuickSlot $w={20}>
            <I w={14} h={9}><path d="M0 0H14L10 4 11 9 7 6 3 9 4 4Z" fill="#f0a818" stroke="#b87810" strokeWidth=".5" /></I>
          </QuickSlot>
          <QuickSlot $w={24}><Caret $mt={-6} /></QuickSlot>
          <QuickSlot $w={26}>
            <I w={16} h={8}><path d="M0 1l8 6 7-6M4 0l4 3 4-3" stroke="#555" strokeWidth="1.4" /></I>
          </QuickSlot>
          <QuickSep $m={4} />
          <QuickSlot $w={20}>
            <I w={14} h={9}><path d="M.5 0V8.5H12.5V0M6 0V4" stroke="#444" /></I>
          </QuickSlot>
          <QuickSlot $w={20}>
            <I w={16} h={9}><path d="M.5 0V8.5H15.5V0" stroke="#444" /></I>
          </QuickSlot>
          <QuickLabel>窗口</QuickLabel>
          <QuickSlot $w={12}><Caret $mt={-6} /></QuickSlot>
          <QuickSlot $w={16}><Caret $mt={-6} /></QuickSlot>
          <WindowTitle>NX - 加工</WindowTitle>
        </QuickBar>

        <TabBar>
          <FileTab>文件(F)</FileTab>
          <Tab $active>主页</Tab>
          {tabs.map((t) => <Tab key={t} $wide={t.includes("-")}>{t}</Tab>)}
        </TabBar>

        <Ribbon>
          <Group $w={209}>
            <GroupBody>
              <RibbonBtn $w={54}><IconBox><IcoCreateTool /></IconBox><BtnLabel>创建刀具</BtnLabel></RibbonBtn>
              <RibbonBtn $w={60}><IconBox><IcoCreateGeom /></IconBox><BtnLabel>创建几何体</BtnLabel></RibbonBtn>
              <RibbonBtn $w={58}><IconBox><IcoCreateOp /></IconBox><BtnLabel>创建工序</BtnLabel></RibbonBtn>
              <SmallCol $w={30} $gap={11} $pt={9}><IcoSmallBlocks /><IcoSmallWaves /></SmallCol>
            </GroupBody>
            <GroupFoot $pl={80}>插入<Caret /></GroupFoot>
          </Group>
          <Group $w={55}>
            <GroupBody>
              <RibbonBtn $w={54}>
                <IconBox><IcoAttr /></IconBox>
                <BtnLabel>属性</BtnLabel>
                <Caret $mt={4} />
              </RibbonBtn>
            </GroupBody>
            <GroupFoot $pl={7}>操作<Caret /></GroupFoot>
          </Group>
          <Group $w={311}>
            <GroupBody>
              <RibbonBtn $w={68}><IconBox><IcoGenPath /></IconBox><BtnLabel $off>生成刀轨</BtnLabel></RibbonBtn>
              <RibbonBtn $w={38}><IconBox><IcoGouge /></IconBox><BtnLabel>过切检查</BtnLabel></RibbonBtn>
              <RibbonBtn $w={66}><IconBox><IcoConfirm /></IconBox><BtnLabel $off>确认刀轨</BtnLabel></RibbonBtn>
              <RibbonBtn $w={42}><IconBox><IcoMachine /></IconBox><BtnLabel>机床仿真</BtnLabel></RibbonBtn>
              <RibbonBtn $w={52}><IconBox><IcoPost /></IconBox><BtnLabel>后处理</BtnLabel></RibbonBtn>
              <RibbonBtn $w={42}><IconBox><IcoMore1 /></IconBox><BtnLabel>更多</BtnLabel><Caret $mt={4} /></RibbonBtn>
            </GroupBody>
          </Group>
          <Group $w={251}>
            <GroupBody $pl={9}>
              <RibbonBtn $w={51} $active><IconBox><IcoShowPath /></IconBox><BtnLabel>显示刀轨</BtnLabel></RibbonBtn>
              <RibbonBtn $w={48}><IconBox><IcoReport /></IconBox><BtnLabel>刀轨报告</BtnLabel></RibbonBtn>
              <SmallCol $w={45} $gap={7} $pt={5}>
                <ToggleBtn><IcoThick /></ToggleBtn>
                <IcoHolder />
              </SmallCol>
              <CaretSlot $w={1} $pt={51}><Caret /></CaretSlot>
              <SmallCol $w={62} $gap={9} $pt={6}><IcoUp /><IcoLayers /><IcoDown /></SmallCol>
              <RibbonBtn $w={20}>
                <IconBox><IcoMore2 /></IconBox><BtnLabel>更多</BtnLabel><Caret $mt={4} />
              </RibbonBtn>
            </GroupBody>
            <GroupFoot $pl={0}><span />
              <Caret />
            </GroupFoot>
          </Group>
          <Group $w={255}>
            <GroupBody $pl={4}>
              <AnimGrid>
                <Round r={12}><path d="M5-6V6L-5 0Z" /></Round>
                <span />
                <Round r={12}><path d="M-5-6H-1V6H-5ZM1-6H5V6H1Z" /></Round>
                <span />
                <Round r={16}><path d="M-5-9V9L9 0Z" /></Round>
                <Round r={12}><path d="M5-6V6L-3 0ZM-5-6V6" /></Round>
                <Caret />
                <Round r={12}><path d="M-5-6V6L3 0ZM5-6V6" /></Round>
                <Caret />
                <PlayLabel>播放</PlayLabel>
              </AnimGrid>
              <SpeedBox>
                <SliderTrack><SliderThumb /></SliderTrack>
                <BtnLabel>速度</BtnLabel>
              </SpeedBox>
            </GroupBody>
            <GroupFoot $pl={96}>刀轨动画<Caret /></GroupFoot>
          </Group>
          <Group $w={40} $last>
            <GroupBody>
              <RibbonBtn $w={26}><IconBox><IcoShowTorch /></IconBox><BtnLabel>显示</BtnLabel></RibbonBtn>
            </GroupBody>
          </Group>
        </Ribbon>

        <Toolbar>
          <Burger><i /><i /><i /></Burger>
          <MenuLabel>菜单(<u>M</u>)</MenuLabel>
          <Caret />
          <ToolSep $l={7} $r={9} />
          <ToolBtn $w={39} $active><TbProgram /></ToolBtn>
          <ToolBtn $w={44}><TbTool /></ToolBtn>
          <ToolBtn $w={42}><TbGeom /></ToolBtn>
          <ToolBtn $w={32}><TbWave /></ToolBtn>
          <ToolSep $l={10} $r={9} />
          <ToolBtn $w={39} $active><TbPathOn /></ToolBtn>
          <ToolBtn $w={42}><TbGouge /></ToolBtn>
          <ToolRight>
            <ToolBtn $w={36}><TbFunnel /></ToolBtn>
            <ToolBtn $w={10}><Caret /></ToolBtn>
            <ToolBtn $w={45}><TbFunnelBack /></ToolBtn>
            <ToolBtn $w={40}><TbTarget /></ToolBtn>
            <ToolBtn $w={42}><TbHex /></ToolBtn>
            <ToolBtn $w={38}><TbCubePlus /></ToolBtn>
            <ToolBtn $w={43}><TbSquarePlus /></ToolBtn>
            <ToolBtn $w={13}><Caret /></ToolBtn>
            <ToolBtn $w={44}><TbCubeCut /></ToolBtn>
            <ToolBtn $w={40}><TbCubeSlice /></ToolBtn>
            <ToolBtn $w={38}><TbFit /></ToolBtn>
            <ToolBtn $w={10}><Caret /></ToolBtn>
          </ToolRight>
        </Toolbar>

        <Main>
          <Sidebar>
            <SideItem $h={27}><Gear c="#333" s={14} /></SideItem>
            <SideItem $h={76}><SideBlock /></SideItem>
            <SideItem $h={38}><SideBracket /></SideItem>
            <SideItem $h={52} $active><SideProg /></SideItem>
            <SideItem $h={49}><SideMesh /></SideItem>
            <SideItem $h={51}><SideMachine /></SideItem>
            <SideItem $h={49}><SideNet /></SideItem>
            <SideItem $h={46}><SideEye /></SideItem>
            <SideItem $h={57}><SideProfile /></SideItem>
            <SideItem $h={70}><SideGlobe /></SideItem>
          </Sidebar>
          <Navigator>
            <NavTitle>工序导航器 - 程序顺序</NavTitle>
            <TreeHead>
              <HeadCell $pl={6}>名称</HeadCell>
              <HeadCell $pl={6}>换刀</HeadCell>
              <HeadCell $pl={6}>刀轨</HeadCell>
            </TreeHead>
            <NavRows />
          </Navigator>
          <Viewport>
            <Scene />
            <CoordPopup>
              <Grip />
              <CoordRows>
                <CoordRow>X<CoordInput>9.184850</CoordInput></CoordRow>
                <CoordRow>Y<CoordInput>17.5</CoordInput></CoordRow>
                <CoordRow>Z<CoordInput>25</CoordInput></CoordRow>
              </CoordRows>
            </CoordPopup>
          </Viewport>
        </Main>

        <Dialog>
          <DlgTitle>
            <Gear s={15} />
            <DlgName>非切削移动</DlgName>
            <DlgTools>
              <span>?</span>
              <I w={12} h={12}><path d="M1 1 11 11M11 1 1 11" stroke="#fff" strokeWidth="2" /></I>
            </DlgTools>
          </DlgTitle>
          <DlgTabs $pl={11} $mt={10}>
            <DlgTab $w={102}>进刀</DlgTab>
            <DlgTab $w={101}>退刀</DlgTab>
            <DlgTab $w={101}>光顺</DlgTab>
          </DlgTabs>
          <DlgTabs $pl={9}>
            <DlgTab $w={88} $active>起点/钻点</DlgTab>
            <DlgTab $w={84}>转移/快速</DlgTab>
            <DlgTab $w={67}>避让</DlgTab>
            <DlgTab $w={67}>更多</DlgTab>
          </DlgTabs>
          <DlgPanel>
            <SectionHead $h={28} $mb={4} $ml={-2}>重叠距离<Chevron /></SectionHead>
            <FieldRow>
              重叠距离
              <FieldGroup>
                <NumInput><NumFill>0. 0000</NumFill></NumInput>
                <SelectBox $w={63}>mm<Caret /></SelectBox>
              </FieldGroup>
            </FieldRow>
            <Divider />
            <SectionHead $h={28} $mb={4} $ml={-2}>区域起点<Chevron /></SectionHead>
            <FieldRow>
              默认区域起点
              <SelectBox $w={141}>中点<Caret /></SelectBox>
            </FieldRow>
            <PointGroup>
              <SectionHead $h={21} $mb={8} $fs={12}>选择点<Chevron /></SectionHead>
              <SelectBar>
                <PointBar><Check s={14} />指定点</PointBar>
                <SquareBtn>
                  <I w={16} h={16}>
                    <circle cx="6" cy="4" r="2" fill="#e87a20" />
                    <path d="M2 13h2M7 13h2M12 13h2" stroke="#333" strokeWidth="1.6" />
                  </I>
                </SquareBtn>
                <SplitBtn>
                  <SplitMain>
                    <I w={24} h={24}>
                      <circle cx="12" cy="12" r="9" stroke="#7a5a30" strokeWidth="1.2" />
                      <circle cx="12" cy="3" r="2.4" fill="#ee8420" />
                      <circle cx="12" cy="21" r="2.4" fill="#ee8420" />
                      <circle cx="3" cy="12" r="2.4" fill="#ee8420" />
                      <circle cx="21" cy="12" r="2.4" fill="#ee8420" />
                    </I>
                  </SplitMain>
                  <SplitCaret><Caret /></SplitCaret>
                </SplitBtn>
              </SelectBar>
              <AddRow>
                添加新集
                <SquareBtn>
                  <I w={16} h={16}><Plus cx={8} cy={8} r={7} /></I>
                </SquareBtn>
              </AddRow>
              <ListBox>
                <SectionHead $h={22} $mb={2} $fs={12} $pr={4}>列表<Chevron /></SectionHead>
                <ListBody>
                  <ListTable>
                    {listRows.map((i) => (
                      <ListRow key={i} $alt={i % 2 === 1}>
                        <ListCell $sel={i === 0}>{i === 0 && "0.0000"}</ListCell>
                        <ListCell $sel={i === 0}>{i === 0 && "17.5000"}</ListCell>
                        <ListCell $sel={i === 0}>{i === 0 && "25.0000"}</ListCell>
                        <ListCell $sel={i === 0} />
                      </ListRow>
                    ))}
                  </ListTable>
                  <ListTools>
                    <SquareBtn>
                      <I w={16} h={16}><path d="M1 1 15 15M15 1 1 15" stroke="#333" /></I>
                    </SquareBtn>
                    <SquareBtn $light>
                      <I w={14} h={16}><path d="M7 1 13 8H10V15H4V8H1Z" fill="#fff" stroke="#bbb" /></I>
                    </SquareBtn>
                    <SquareBtn $light>
                      <I w={14} h={16}><path d="M7 15 13 8H10V1H4V8H1Z" fill="#fff" stroke="#bbb" /></I>
                    </SquareBtn>
                  </ListTools>
                </ListBody>
              </ListBox>
            </PointGroup>
            <FieldRow $mt={1}>
              有效距离
              <SelectBox $w={141}>指定<Caret /></SelectBox>
            </FieldRow>
            <FieldRow $mt={3}>
              距离
              <FieldGroup>
                <NumInput>50.0000</NumInput>
                <SelectBox $w={63}>mm<Caret /></SelectBox>
              </FieldGroup>
            </FieldRow>
          </DlgPanel>
        </Dialog>

        <Watermark>
          <Logo />
          <MarkText>
            <MarkTitle>3D世界网</MarkTitle>
            <MarkSub>WWW.3DSJW.COM</MarkSub>
          </MarkText>
        </Watermark>
      </Page>
    </>
  );
}
